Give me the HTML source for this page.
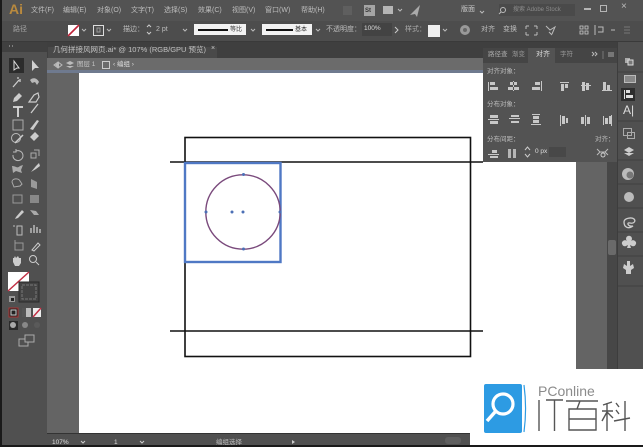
<!DOCTYPE html>
<html><head><meta charset="utf-8"><style>
html,body{margin:0;padding:0;background:#111}
#r{position:relative;width:643px;height:447px;overflow:hidden;background:#4f4f4f;font-family:"Liberation Sans","Noto Sans CJK SC",sans-serif;color:#c4c4c4;filter:blur(.35px)}
#r div{position:absolute}
.t{font-size:7px;line-height:10px;white-space:nowrap;color:#bdbdbd}
svg{position:absolute;left:0;top:0}
</style></head><body><div id="r">
<div style="left:2px;top:0;width:641px;height:21px;background:#535353"></div>
<div style="left:2px;top:21px;width:641px;height:20px;background:#4d4d4d"></div>
<div style="left:2px;top:41px;width:641px;height:1px;background:#3a3a3a"></div>
<div style="left:2px;top:42px;width:45px;height:405px;background:#505050"></div>
<div style="left:2px;top:42px;width:45px;height:10px;background:#404040"></div>
<div style="left:47px;top:42px;width:570px;height:16px;background:#3f3f3f"></div>
<div style="left:48px;top:47px;width:169px;height:11px;background:#494949"></div>
<div style="left:47px;top:58px;width:436px;height:12px;background:#6b6b6b"></div>
<div style="left:47px;top:70px;width:570px;height:364px;background:#646464"></div>
<div style="left:79px;top:73px;width:497px;height:361px;background:#fff"></div>
<div style="left:47px;top:70px;width:436px;height:3px;background:#6f7a8f"></div>
<div style="left:607px;top:162px;width:10px;height:272px;background:#474747"></div>
<div style="left:608px;top:240px;width:8px;height:15px;background:#6a6a6a;border-radius:2px"></div>
<div style="left:617px;top:42px;width:26px;height:405px;background:#505050;border-left:1px solid #3d3d3d;box-sizing:border-box"></div>
<div style="left:47px;top:433px;width:570px;height:1px;background:#333"></div>
<div style="left:47px;top:434px;width:570px;height:11px;background:#505050"></div>
<div style="left:483px;top:48px;width:134px;height:114px;background:#535353"></div>
<div style="left:483px;top:48px;width:134px;height:15px;background:#454545"></div>
<div style="left:528px;top:48px;width:27px;height:15px;background:#535353"></div>

<div class="t" style="left:9px;top:1px;font-size:14px;line-height:16px;font-weight:bold;color:#b98a3e">Ai</div>
<div class="t" style="left:31px;top:6px">文件(F)</div>
<div class="t" style="left:63px;top:6px">编辑(E)</div>
<div class="t" style="left:97px;top:6px">对象(O)</div>
<div class="t" style="left:131px;top:6px">文字(T)</div>
<div class="t" style="left:164px;top:6px">选择(S)</div>
<div class="t" style="left:198px;top:6px">效果(C)</div>
<div class="t" style="left:232px;top:6px">视图(V)</div>
<div class="t" style="left:265px;top:6px">窗口(W)</div>
<div class="t" style="left:301px;top:6px">帮助(H)</div>
<div style="left:343px;top:6px;width:9px;height:9px;background:#5f5f5f"></div>
<div style="left:364px;top:5px;width:11px;height:11px;background:#a5a5a5"></div>
<div class="t" style="left:365px;top:6px;font-size:6px;color:#333;font-weight:bold">St</div>
<div style="left:383px;top:6px;width:10px;height:8px;background:#b5b5b5"></div>
<div class="t" style="left:461px;top:5px;color:#c8c8c8">版面</div>
<div style="left:499px;top:4px;width:76px;height:12px;background:#4a4a4a"></div>
<div class="t" style="left:513px;top:5px;font-size:6px;color:#8c8c8c">搜索 Adobe Stock</div>
<div style="left:584px;top:8px;width:7px;height:2px;background:#b5b5b5"></div>
<div style="left:600px;top:5px;width:5px;height:5px;border:1px solid #b5b5b5"></div>
<div class="t" style="left:621px;top:2px;font-size:10px;color:#bbb">×</div>

<div class="t" style="left:13px;top:25px;color:#a5a5a5">路径</div>
<div class="t" style="left:123px;top:25px">描边：</div>
<div class="t" style="left:156px;top:25px">2 pt</div>
<div style="left:194px;top:24px;width:52px;height:11px;background:#f2f2f2"></div>
<div style="left:198px;top:29px;width:30px;height:2px;background:#111"></div>
<div class="t" style="left:230px;top:25px;color:#333;font-size:6px">等比</div>
<div style="left:262px;top:24px;width:50px;height:11px;background:#f2f2f2"></div>
<div style="left:266px;top:29px;width:27px;height:2px;background:#111"></div>
<div class="t" style="left:295px;top:25px;color:#333;font-size:6px">基本</div>
<div class="t" style="left:326px;top:25px">不透明度：</div>
<div style="left:362px;top:23px;width:30px;height:13px;background:#434343"></div>
<div class="t" style="left:364px;top:24px;font-size:6.5px;color:#ddd">100%</div>
<div class="t" style="left:405px;top:25px;color:#aaa">样式：</div>
<div style="left:428px;top:25px;width:12px;height:12px;background:#eee"></div>
<div class="t" style="left:481px;top:25px">对齐</div>
<div class="t" style="left:503px;top:25px">变换</div>

<div class="t" style="left:53px;top:45px;color:#c0c0c0;font-size:7.5px">几何拼接风网页.ai* @ 107% (RGB/GPU 预览)</div>
<div class="t" style="left:211px;top:44px;color:#ccc">×</div>
<div class="t" style="left:77px;top:60px;color:#c4c4c4;font-size:6.5px">图层 1</div>
<div class="t" style="left:113px;top:60px;color:#ddd;font-size:6.5px">‹ 编组 ›</div>

<div class="t" style="left:488px;top:50px;font-size:6.5px;color:#aaa">路径查</div>
<div class="t" style="left:512px;top:50px;font-size:6.5px;color:#999">渐变</div>
<div class="t" style="left:536px;top:50px;color:#ddd">对齐</div>
<div class="t" style="left:560px;top:50px;font-size:6.5px;color:#999">字符</div>
<div class="t" style="left:487px;top:67px;font-size:6.5px">对齐对象：</div>
<div class="t" style="left:487px;top:100px;font-size:6.5px">分布对象：</div>
<div class="t" style="left:487px;top:135px;font-size:6.5px">分布间距：</div>
<div class="t" style="left:595px;top:135px;font-size:6.5px">对齐：</div>
<div style="left:549px;top:147px;width:17px;height:10px;background:#484848"></div>
<div class="t" style="left:535px;top:147px;font-size:6.5px;color:#ddd">0 px</div>

<div class="t" style="left:623px;top:103px;font-size:12px;line-height:14px;color:#ddd">A|</div>
<div class="t" style="left:52px;top:439px;font-size:6.5px;line-height:7px;color:#ddd">107%</div>
<div class="t" style="left:114px;top:439px;font-size:6.5px;line-height:7px;color:#ddd">1</div>
<div class="t" style="left:216px;top:439px;font-size:6.5px;line-height:7px;color:#bbb">编组选择</div>

<svg width="643" height="447" viewBox="0 0 643 447" fill="none">
<path d="M68 25h11v11h-11z" fill="#fff"/><path d="M68 36l11-11" stroke="#c0243a" stroke-width="1.600"/>
<path d="M82 29l2 2 2-2M107 29l2 2 2-2M183 29l2 2 2-2M251 29l2 2 2-2M316 29l2 2 2-2M443 29l2 2 2-2M398 9l2 2 2-2M480 11l2 2 2-2" stroke="#bbb"/>
<rect x="93.500" y="25.500" width="10" height="10" stroke="#ddd"/><rect x="97" y="28" width="3" height="4" stroke="#999"/>
<path d="M147 27l2-2 2 2M147 32l2 2 2-2" stroke="#ccc"/>
<path d="M395 27l3 3-3 3" stroke="#ccc"/>
<circle cx="465" cy="30" r="5" fill="#999"/><circle cx="465" cy="30" r="2" fill="#666"/>
<path d="M410 15l10-10-3 12-2-3z" fill="#aaa"/>
<circle cx="503" cy="10" r="2.500" stroke="#bbb"/><path d="M501 12l-2 2" stroke="#bbb"/>
<path d="M526 26h3M526 26v3M537 26h-3M537 26v3M526 35h3M526 35v-3M537 35h-3M537 35v-3" stroke="#bbb"/>
<path d="M546 26l4 4 5-3-3 7M549 32l3 3" stroke="#bbb"/>
<path d="M580 26h3v3h-3zM585 26h3v3h-3zM580 31h3v3h-3zM585 31h3v3h-3z" stroke="#ccc" stroke-width=".8"/>
<path d="M595 25v10M598 27h5v5h-5M611 30h4" stroke="#bbb"/><path d="M624 27h6M624 30h6M624 33h6" stroke="#777"/>
<path d="M55 65l4-3.500 0 7z" fill="#bbb"/>
<path d="M58 62l-4 3 4 3 4-3z" stroke="#bbb" fill="none"/><path d="M66 63l4-2 4 2-4 2zM66 66l4 2 4-2" fill="#bbb"/>
<rect x="102.500" y="61.500" width="7" height="7" stroke="#ccc"/>
<rect x="9" y="58" width="15" height="15" fill="#2c2c2c"/>
<path d="M14 61v9l3-2 2 0z" stroke="#ddd"/><path d="M32 60l0 11 3-3 4 0z" fill="#d0d0d0"/>
<path d="M13 87l6-7M20 79v3M17 78h2" stroke="#ccc" stroke-width="1.300"/><path d="M30 80c3-3 7-2 9 2l-2 3-2-3-3 1z" fill="#b8b8b8"/>
<path d="M14 98l5-5 3 3-5 5-4 1z" fill="#ccc"/><path d="M29 102l5-7 4-2 1 4-3 5z" stroke="#ccc" stroke-width="1.200"/>
<path d="M13 107h10M18 107v10" stroke="#ddd" stroke-width="1.800"/><path d="M31 113l7-9" stroke="#ccc" stroke-width="1.300"/>
<rect x="13" y="120" width="10" height="10" stroke="#aaa"/><path d="M30 129l7-9 2 1-6 9z" fill="#ccc"/>
<circle cx="16" cy="138" r="4.500" stroke="#bbb"/><path d="M15 143l8-8" stroke="#ccc" stroke-width="1.500"/><path d="M30 137l5-5 4 4-5 5z" fill="#ccc"/>
<path d="M13 155a5 5 0 1 0 3-4M16 149v3h-3" stroke="#bbb"/><path d="M31 153h5v5h-5zM34 150h5v6" stroke="#aaa"/>
<path d="M12 166c4 0 5 3 8 0l3-1-2 5 1 3-6-2-3 2z" fill="#aaa"/><path d="M31 172l5-6 3-3 1 3-4 3z" fill="#ccc"/>
<path d="M12 182c0-4 7-4 8-1l2 3-2 2-6 1z" stroke="#aaa"/><path d="M31 179l6 3 0 7-6-2z" fill="#999"/>
<rect x="13" y="195" width="9" height="8" stroke="#999"/><rect x="30" y="195" width="9" height="8" fill="#888"/>
<path d="M16 217l6-7 2 2-6 6-3 1z" fill="#ccc"/><path d="M30 210l6 1 3 4h-5z" fill="#aaa"/>
<path d="M17 226h5v9h-5zM13 226h2" stroke="#bbb"/><path d="M31 233v-5M34 233v-8M37 233v-6M40 233v-4" stroke="#ccc" stroke-width="1.300"/>
<path d="M15 243h8v7h-8zM15 240v3" stroke="#999"/><path d="M32 250l6-7 2 2-6 6z" stroke="#ccc"/>
<path d="M13 262v-4l1 0 1-2 1 2 2-2 1 2 2 0v5l-2 3h-4z" fill="#ccc"/><circle cx="33" cy="259" r="3.500" stroke="#ccc"/><path d="M36 262l3 3" stroke="#ccc"/>
<rect x="8" y="272" width="21" height="19" fill="#fff"/><path d="M8 291l21-19" stroke="#c23045" stroke-width="1.500"/>
<rect x="19" y="282" width="20" height="20" fill="#444" stroke="#2a2a2a"/><rect x="22" y="285" width="14" height="14" stroke="#777" stroke-dasharray="3 1"/>
<rect x="9" y="296" width="6" height="6" fill="#999"/><rect x="11" y="298" width="3" height="3" fill="#222"/>
<rect x="9" y="308" width="9" height="9" fill="#222" stroke="#a33"/><rect x="11" y="310" width="5" height="5" stroke="#ccc"/>
<rect x="22" y="308" width="9" height="9" fill="#bbb"/><rect x="22" y="308" width="4" height="9" fill="#555"/>
<rect x="33" y="308" width="8" height="9" fill="#eee"/><path d="M33 317l8-9" stroke="#c23045" stroke-width="1.500"/>
<rect x="9" y="321" width="9" height="9" fill="#2a2a2a"/><circle cx="13" cy="325" r="3" fill="#aaa"/><circle cx="25" cy="325" r="3" fill="#888"/><circle cx="37" cy="325" r="3" fill="#5a5a5a"/>
<rect x="19" y="339" width="9" height="7" stroke="#aaa"/><rect x="25" y="335" width="9" height="7" fill="#505050" stroke="#aaa"/>
<path d="M9 46h1M12 46h1" stroke="#bbb"/>
<g fill="#c8c8c8">
<path d="M488 82v9h1v-9zM490 82h5v3h-5zM490 87h8v3h-8z"/>
<path d="M513 81v10h1V81zM510 82h7v3h-7zM508 87h11v3h-11z"/>
<path d="M541 81v10h1V81zM535 82h5v3h-5zM532 87h8v3h-8z"/>
<path d="M560 82h9v1h-9zM561 84h3v7h-3zM565 84h3v4h-3z"/>
<path d="M581 85h10v1h-10zM582 82h3v9h-3zM586 83h3v7h-3z"/>
<path d="M602 90h10v1h-10zM603 82h3v8h-3zM607 85h3v5h-3z"/>
<path d="M490 115h8v3h-8zM488 119h11v1h-11zM490 121h8v3h-8z"/>
<path d="M511 115h8v2h-8zM509 118h11v1h-11zM511 121h8v2h-8z"/>
<path d="M532 114h8v1h-8zM533 116h6v3h-6zM533 120h6v3h-6zM531 124h10v1h-10z"/>
<path d="M560 115h1v11h-1zM562 116h3v8h-3zM566 118h2v5h-2z"/>
<path d="M581 117h3v7h-3zM585 115h1v11h-1zM587 117h3v7h-3z"/>
<path d="M603 116h1v9h-1zM605 118h3v6h-3zM609 116h3v8h-3zM611 115h1v11h-1z"/>
<path d="M492 150h5v3h-5zM488 154h11v1h-11zM490 156h8v2h-8z"/>
<path d="M508 149h3v9h-3zM513 149h3v9h-3z" opacity=".85"/>
</g>
<path d="M525 150l2.500-3 2.500 3M525 154l2.500 3 2.500-3" stroke="#ccc"/>
<path d="M597 149l3 3-3 3M608 149l-3 3 3 3M600 152h5" stroke="#bbb"/><circle cx="603" cy="155" r="2" stroke="#ccc"/>
<path d="M592 52l2 2-2 2M595 52l2 2-2 2" stroke="#bbb"/><path d="M603 51v8" stroke="#777"/><rect x="608" y="52" width="6" height="5" fill="#777"/>
<path d="M618 72h25M618 121h25M618 160h25M618 184h25M618 208h25M618 232h25M618 256h25M618 286h25" stroke="#3f3f3f"/>
<rect x="625" y="58" width="5" height="5" fill="#aaa"/><rect x="628" y="60" width="5" height="5" fill="#777" stroke="#ddd"/>
<rect x="624.500" y="75.500" width="11" height="7" fill="#888" stroke="#bbb"/>
<rect x="621" y="88" width="14" height="13" fill="#2d2d2d"/><path d="M624.500 90v9" stroke="#ddd"/><path d="M626 90h4v3h-4zM626 95h7v3h-7z" fill="#ddd"/>
<rect x="623.500" y="128.500" width="8" height="7" stroke="#aaa"/><rect x="627.500" y="132.500" width="7" height="6" stroke="#aaa"/>
<path d="M629 147l5 3-5 3-5-3zM624 153l5 3 5-3" fill="#ccc"/>
<circle cx="628" cy="174" r="6" fill="#bbb"/><circle cx="630" cy="175" r="3.500" fill="#777"/>
<circle cx="629" cy="197" r="5" fill="#bbb"/>
<path d="M624 222c0-4 8-5 10-3s0 5-4 4-2 4 3 3c-4 3-9 2-9-4z" stroke="#ccc" stroke-width="1.300"/>
<path d="M627 241a3 3 0 1 1 4 0 3 3 0 1 1 1 5l-2-1 1 3h-4l1-3-2 1a3 3 0 1 1 1-5z" fill="#ccc"/>
<path d="M624 264l3 2 0-5 3 0 0 5 3-2 1 4-3 2 0 4h-5v-4l-3-2z" fill="#ccc"/>
<rect x="185" y="137.500" width="285.500" height="219" stroke="#111" stroke-width="1.600"/>
<path d="M170 162h313M170 331h313" stroke="#111" stroke-width="1.600"/>
<rect x="185" y="163" width="95.500" height="99" stroke="#4f78c4" stroke-width="2.400"/>
<circle cx="243" cy="212" r="37.200" stroke="#7a4a7c" stroke-width="1.400"/>
<g fill="#4b6fb5"><circle cx="243.500" cy="174.500" r="1.500"/><circle cx="243.500" cy="249" r="1.500"/><circle cx="206" cy="212" r="1.500"/><circle cx="280" cy="212" r="1.500"/><circle cx="232" cy="212" r="1.500"/><circle cx="243" cy="212" r="1.500"/></g>
<path d="M81 441l2 2 2-2M140 441l2 2 2-2" stroke="#ccc"/><path d="M292 440l3 2-3 2z" fill="#ccc"/><rect x="445" y="437" width="16" height="7" rx="3" fill="#5f5f5f"/>
</svg>

<div style="left:470px;top:383px;width:173px;height:62px;background:#fff"></div>
<div style="left:576px;top:369px;width:67px;height:30px;background:#fff"></div>
<div style="left:0;top:0;width:2px;height:447px;background:#1a1a1a"></div>
<div style="left:0;top:445px;width:643px;height:2px;background:#1a1a1a"></div>
<svg width="643" height="447" viewBox="0 0 643 447" fill="none">
<rect x="484" y="384" width="38" height="49" rx="2" fill="#2d9be3"/>
<path d="M524 385c2 15 2 32 0 47" stroke="#2d9be3" stroke-width="1.200"/>
<circle cx="503" cy="404" r="10" stroke="#fff" stroke-width="3.200"/>
<path d="M495 412l-8 9" stroke="#fff" stroke-width="3.500"/>
<g stroke="#555" stroke-width="1.400">
<path d="M539 400v31M546 400h17M554.500 400v31"/>
<path d="M566 401h32M580 401l-3 8M569 409h27v21h-27zM569 419h27"/>
<path d="M603 405l9-3M607 403v28M602 411h11M607 412l-5 9M607 412l6 6M616 403l3 4M616 410l3 4M614 421l16-3M625 401v30"/>
</g>
</svg>
<div class="t" style="left:538px;top:383px;font-size:14px;line-height:16px;color:#8b8b8b">PConline</div>
</div></body></html>
